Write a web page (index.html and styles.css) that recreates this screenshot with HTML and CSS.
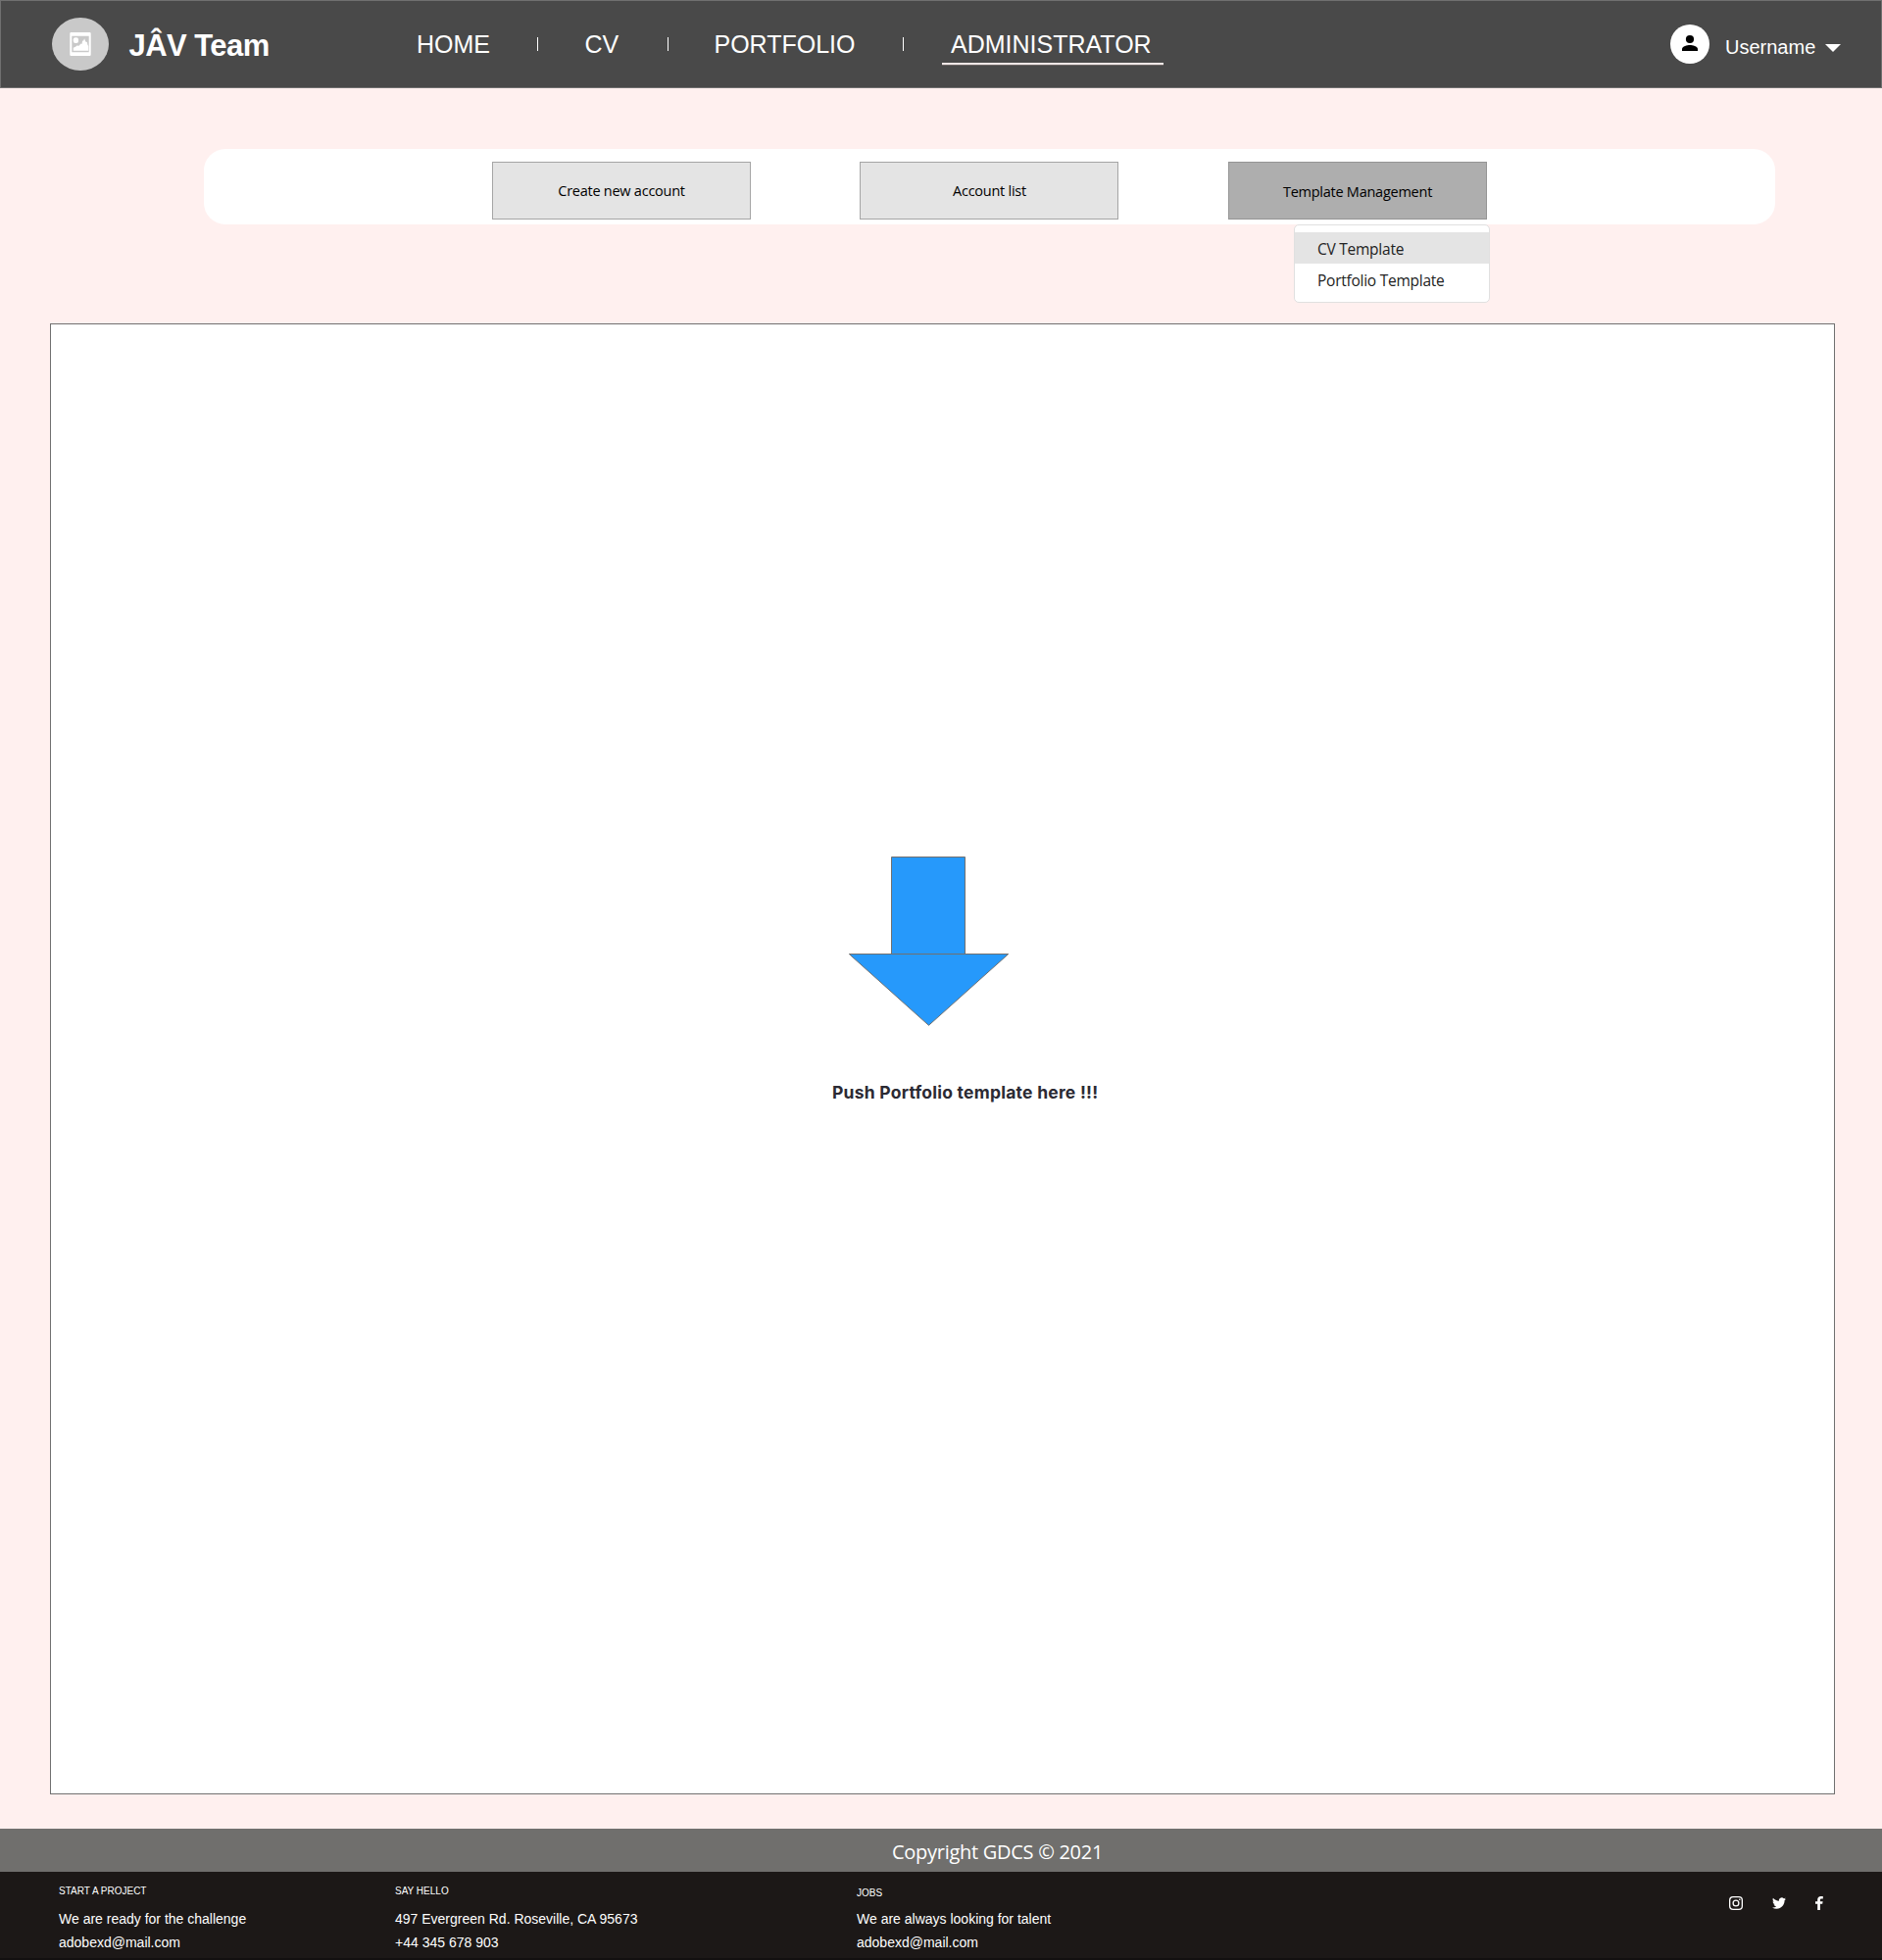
FILE: index.html
```html
<!DOCTYPE html>
<html lang="en">
<head>
<meta charset="utf-8">
<title>JÂV Team - Administrator</title>
<link rel="stylesheet" href="styles.css">
</head>
<body>
<header class="topbar">
  <svg class="logo" width="58" height="54" viewBox="0 0 58 54">
    <ellipse cx="29" cy="27" rx="29" ry="27" fill="#c9c9c9"/>
    <path fill="#fff" fill-rule="evenodd" d="M19.500 15h19q1.200 0 1.200 1.200v21.600q0 1.200-1.200 1.200h-19q-1.200 0-1.200-1.200V16.200q0-1.200 1.200-1.200zM20.300 18.700v16.600h17.400V18.700z"/>
    <rect x="21.800" y="20.300" width="5.200" height="5.700" rx="2" fill="#fff"/>
    <path fill="#fff" d="M21.800 33.700v-3l2.200-1 1.500-1.200 2 .3 2-2.300 1 .5.600-3.500 1 .3 1-2.500 1.200 3.200 1.500.5.700 3 .7 1v4.700z"/>
  </svg>
  <div class="brand">JÂV Team</div>
  <nav class="nav">
    <a>HOME</a><i></i>
    <a>CV</a><i></i>
    <a>PORTFOLIO</a><i></i>
    <a class="current">ADMINISTRATOR</a>
  </nav>
  <div class="user">
    <svg width="40" height="40" viewBox="0 0 40 40">
      <circle cx="20" cy="20" r="20" fill="#fff"/>
      <circle cx="20" cy="15" r="4.100"/>
      <path d="M12 27v-2c0-2.700 5.300-4 8-4s8 1.300 8 4v2z"/>
    </svg>
    <span class="username">Username</span>
    <svg class="caret" width="16" height="8" viewBox="0 0 16 8"><path d="M0 0h16L8 8z" fill="#fff"/></svg>
  </div>
</header>
<main class="page">
  <section class="tabs">
    <button class="tab create">Create new account</button>
    <button class="tab list">Account list</button>
    <div class="tab-group">
      <button class="tab active">Template Management</button>
      <ul class="menu">
        <li class="selected">CV Template</li>
        <li>Portfolio Template</li>
      </ul>
    </div>
  </section>
  <section class="dropzone">
    <svg class="arrow" width="164" height="176" viewBox="0 0 164 176" fill="#2699fb" stroke="#707070">
      <path d="M43.500.5h75v99h-75z"/>
      <path d="M.3 99.500h162.400L81.500 172.300z"/>
    </svg>
    <p class="hint">Push Portfolio template here !!!</p>
  </section>
</main>
<footer>
  <div class="copyright"><span>Copyright GDCS © 2021</span></div>
  <div class="contacts">
    <div class="column">
      <h4>START A PROJECT</h4>
      <p>We are ready for the challenge</p>
      <p>adobexd@mail.com</p>
    </div>
    <div class="column">
      <h4>SAY HELLO</h4>
      <p>497 Evergreen Rd. Roseville, CA 95673</p>
      <p>+44 345 678 903</p>
    </div>
    <div class="column jobs">
      <h4>JOBS</h4>
      <p>We are always looking for talent</p>
      <p>adobexd@mail.com</p>
    </div>
    <div class="social">
      <svg width="14" height="14" viewBox="0 0 14 14" fill="none" stroke="#fff" stroke-width="1.300">
        <rect x=".65" y=".65" width="12.700" height="12.700" rx="3.400"/>
        <circle cx="7" cy="7" r="2.900"/>
        <circle cx="10.800" cy="3.200" r=".8" fill="#fff" stroke="none"/>
      </svg>
      <svg width="14" height="14" viewBox="0 0 24 24" fill="#fff">
        <path d="M23.950 4.570a10 10 0 0 1-2.820.77 4.960 4.960 0 0 0 2.160-2.720c-.95.550-2 .96-3.130 1.180a4.920 4.920 0 0 0-8.380 4.480C7.690 8.090 4.070 6.130 1.640 3.160a4.820 4.820 0 0 0-.67 2.480c0 1.710.87 3.210 2.190 4.100a4.900 4.900 0 0 1-2.230-.62v.06a4.920 4.920 0 0 0 3.950 4.830 5 5 0 0 1-2.210.08 4.940 4.940 0 0 0 4.600 3.420A9.870 9.870 0 0 1 0 19.540a14 14 0 0 0 7.550 2.210c9.050 0 14-7.500 14-13.980 0-.21 0-.42-.02-.63a9.940 9.940 0 0 0 2.420-2.570z"/>
      </svg>
      <svg width="8" height="14" viewBox="0 0 8 14" fill="#fff">
        <path d="M2.200 14V7.700H0V5.300h2.200V3.500C2.200 1.200 3.500 0 5.600 0c1 0 1.900.1 2.200.1v2.300H6.300c-1.200 0-1.400.6-1.400 1.400v1.500h2.700l-.4 2.400H4.900V14z"/>
      </svg>
    </div>
  </div>
</footer>
</body>
</html>
```
FILE: styles.css
```css
* { box-sizing: border-box; }
body {
  margin: 0;
  background: #fff0ef;
  font-family: "Liberation Sans", Arial, sans-serif;
  height: 2000px;
  display: flex;
  flex-direction: column;
}
h4, p, ul { margin: 0; padding: 0; }
svg { display: block; flex: none; }

.topbar {
  display: flex;
  align-items: center;
  height: 90px;
  background: #494949;
  border: 1px solid #707070;
  color: #fff;
}
.logo { margin-left: 52px; }
.brand {
  width: 293.500px;
  margin-left: 20.500px;
  padding-top: 4px;
  font-size: 31px;
  font-weight: bold;
  letter-spacing: -0.550px;
}
.nav {
  display: grid;
  grid-template-columns: 123px 48.500px 84px 48px 192.500px 39.500px 226px;
  align-items: center;
  font-size: 25px;
  line-height: 42px;
}
.nav i { width: 1px; height: 14px; background: #fff; }
.nav .current {
  height: 42px;
  padding-left: 9.500px;
  border-bottom: 2px solid #efe7e6;
  box-shadow: 0 1px 0 #6e6665;
}
.user {
  display: flex;
  align-items: center;
  margin-left: auto;
  margin-right: 41px;
}
.username { margin: 7px 10px 0 16px; font-size: 20px; width: 92px; }
.caret { margin-top: 8px; }

.page { flex: 1; padding: 62px 48px 0 51px; }
.tabs {
  display: flex;
  width: 1603px;
  height: 77px;
  margin-left: 157px;
  padding: 13px 0 0 294px;
  background: #fff;
  border-radius: 22px;
}
.tab {
  display: block;
  width: 264px;
  height: 59px;
  padding: 0;
  border: 1px solid #a5a5a5;
  background: #e4e4e4;
  color: #000;
  font: 400 14.500px "Open Sans", "Noto Sans", sans-serif;
  letter-spacing: -0.250px;
}
.list { margin: 0 112px 0 111px; padding-left: 1px; }
.tab.active { background: #aeaeae; border-color: #959595; padding: 1px 0 0; }
.tab-group { position: relative; }
.menu {
  position: absolute;
  left: 67px;
  top: 64px;
  width: 200px;
  height: 80px;
  padding-top: 7px;
  background: #fff;
  border: 1px solid #e0e0e0;
  border-radius: 5px;
  list-style: none;
  color: #222;
  font: 400 15.500px/34px "Open Sans", "Noto Sans", sans-serif;
  letter-spacing: -0.250px;
}
.menu li { height: 32px; padding-left: 23px; }
.menu .selected { background: #e4e4e4; }

.dropzone {
  height: 1501px;
  margin-top: 101px;
  padding: 543px 0 0 797px;
  background: #fff;
  border: 1px solid #707070;
}
.arrow { margin-left: 17px; overflow: visible; }
.hint {
  margin-top: 50px;
  font: 700 17.500px/29px Inter, sans-serif;
  letter-spacing: 0.240px;
  color: #2b2a33;
  white-space: nowrap;
}

.copyright {
  height: 44px;
  padding-left: 910px;
  background: #706f6d;
  color: #fff;
  font: 20px/47px "Open Sans", "Noto Sans", sans-serif;
  letter-spacing: -0.280px;
}
.contacts {
  display: flex;
  height: 90px;
  padding: 14px 60px 0;
  background: #1c1817;
  border-bottom: 2px solid #131010;
  color: #fff;
}
.column { width: 343px; }
.column + .column { width: 471px; }
.contacts h4 { font-size: 10px; font-weight: normal; line-height: 12px; margin-bottom: 10px; }
.contacts p { font-size: 14px; line-height: 24px; }
.contacts .jobs h4 { margin: 2px 0 8px; }
.social {
  display: flex;
  gap: 30px;
  align-items: flex-start;
  margin: 11px 0 0 auto;
}
```
